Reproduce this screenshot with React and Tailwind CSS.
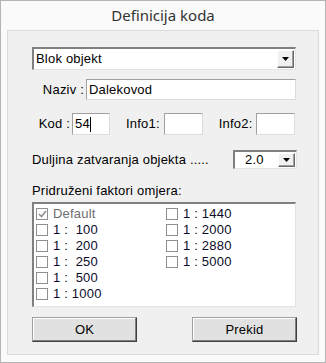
import React from "react";

const FONT = { fontFamily: '"Liberation Sans", Tahoma, sans-serif', letterSpacing: "0.2px" };

const Arrow = () => (
  <svg width="7" height="4" viewBox="0 0 7 4">
    <path d="M0 0h7L3.5 4z" fill="#000" />
  </svg>
);

const DropButton = () => (
  <div className="w-[17px] self-stretch m-[1px] bg-[#f0f0f0] border border-t-white border-l-white border-r-[#696969] border-b-[#696969] shadow-[inset_-1px_-1px_0_#a0a0a0] flex items-center justify-center">
    <Arrow />
  </div>
);

const Combo = ({ value, className }) => (
  <div
    className={`flex bg-white border-t-2 border-l-2 border-t-[#808080] border-l-[#808080] border-r border-b border-r-[#e3e3e3] border-b-[#e3e3e3] ${className}`}
  >
    <div className="flex-1 flex items-center pl-[2px] text-[13px] text-black">{value}</div>
    <DropButton />
  </div>
);

const Field = ({ value, className, caret }) => (
  <div
    className={`flex items-center bg-white border border-t-[#a0a0a0] border-l-[#a0a0a0] border-r-[#dcdcdc] border-b-[#dcdcdc] pl-[2px] text-[13px] text-black ${className}`}
  >
    {value}
    {caret && <span className="w-[1px] h-[15px] bg-black" />}
  </div>
);

const Check = ({ checked, disabled, label }) => (
  <div className="flex items-center h-[16px]">
    <span className="w-[12px] h-[12px] border border-[#8f8f8f] bg-white flex items-center justify-center mr-[5px]">
      {checked && (
        <svg width="9" height="8" viewBox="0 0 9 8">
          <path d="M1 4l2.5 2.5L8 1" stroke="#8f8f8f" strokeWidth="1.6" fill="none" />
        </svg>
      )}
    </span>
    <span className={`text-[13px] whitespace-pre ${disabled ? "text-[#6d6d6d]" : "text-[#0b0b2a]"}`}>{label}</span>
  </div>
);

const Btn = ({ label }) => (
  <div className="w-[105px] h-[25px] bg-[#e1e1e1] border border-t-[#a0a0a0] border-l-[#a0a0a0] border-r-[#404040] border-b-[#404040] shadow-[inset_-1px_-1px_0_#808080,inset_1px_1px_0_#fff] flex items-center justify-center text-[13px] text-black">
    {label}
  </div>
);

export default function App() {
  const left = [
    { label: "Default", checked: true, disabled: true },
    { label: "1 :  100" },
    { label: "1 :  200" },
    { label: "1 :  250" },
    { label: "1 :  500" },
    { label: "1 : 1000" },
  ];
  const right = ["1 : 1440", "1 : 2000", "1 : 2880", "1 : 5000"];

  return (
    <div style={FONT} className="w-[326px] h-[363px] bg-[#fafafa] border border-[#b4b4b4] flex flex-col">
      <div className="h-[29px] flex items-center justify-center text-[15px] text-[#333]" style={{ fontFamily: '"Noto Sans", "Open Sans", sans-serif', letterSpacing: 0 }}>
        Definicija koda
      </div>
      <div className="mx-[6px] mb-[7px] flex-1 bg-[#f0f0f0] border border-[#dadada] pl-[24px] pr-[21px] pt-[16px]">
        <Combo value="Blok objekt" className="w-[264px] h-[23px]" />

        <div className="flex items-center mt-[9px] h-[21px]">
          <span className="w-[52px] text-right text-[13px] text-black mr-[2px]">Naziv :</span>
          <Field value="Dalekovod" className="w-[210px] h-[21px]" />
        </div>

        <div className="flex items-center mt-[13px] h-[22px]">
          <span className="w-[38px] text-right text-[13px] text-black mr-[2px]">Kod :</span>
          <Field value="54" caret className="w-[38px] h-[22px]" />
          <span className="ml-[16px] text-[13px] text-black mr-[4px]">Info1:</span>
          <Field value="" className="w-[39px] h-[22px]" />
          <span className="ml-[16px] text-[13px] text-black mr-[4px]">Info2:</span>
          <Field value="" className="w-[39px] h-[22px]" />
        </div>

        <div className="flex items-center mt-[15px] h-[19px]">
          <span className="flex-1 text-[13px] text-black">Duljina zatvaranja objekta .....</span>
          <Combo value={<span className="pl-[8px]">2.0</span>} className="w-[64px] h-[19px]" />
        </div>

        <div className="mt-[14px] text-[13px] text-black leading-[16px]">Pridruženi faktori omjera:</div>

        <div className="mt-[3px] w-[264px] h-[105px] bg-white border-t-2 border-l-2 border-t-[#808080] border-l-[#808080] border-r border-b border-r-[#e3e3e3] border-b-[#e3e3e3] pl-[2px] pt-[2px] flex">
          <div className="w-[130px] flex flex-col">
            {left.map((c) => (
              <Check key={c.label} {...c} />
            ))}
          </div>
          <div className="flex flex-col">
            {right.map((l) => (
              <Check key={l} label={l} />
            ))}
          </div>
        </div>

        <div className="mt-[10px] flex justify-between w-[265px]">
          <Btn label="OK" />
          <Btn label="Prekid" />
        </div>
      </div>
    </div>
  );
}
